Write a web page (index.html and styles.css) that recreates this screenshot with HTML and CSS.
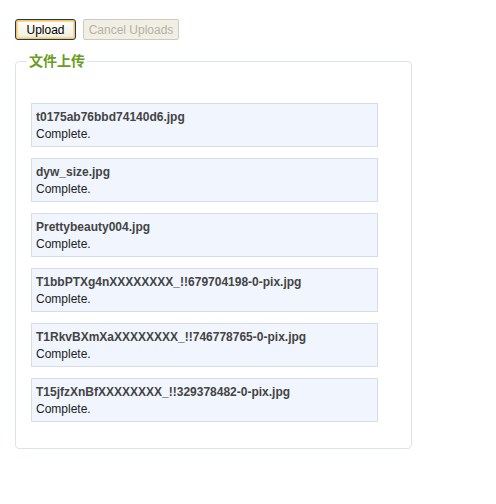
FILE: index.html
```html
<!DOCTYPE html>
<html lang="zh-CN">
<head>
    <meta charset="UTF-8">
    <title>文件上传</title>
    <link rel="stylesheet" href="styles.css">
</head>
<body>

<div class="toolbar">
    <button class="btn btn-upload">Upload</button>
    <button class="btn btn-cancel" disabled>Cancel Uploads</button>
</div>

<fieldset class="upload-box">
    <legend>文件上传</legend>
    <div class="progress-list">
        <div class="progress-item">
            <div class="file-name">t0175ab76bbd74140d6.jpg</div>
            <div class="file-status">Complete.</div>
        </div>
        <div class="progress-item">
            <div class="file-name">dyw_size.jpg</div>
            <div class="file-status">Complete.</div>
        </div>
        <div class="progress-item">
            <div class="file-name">Prettybeauty004.jpg</div>
            <div class="file-status">Complete.</div>
        </div>
        <div class="progress-item">
            <div class="file-name">T1bbPTXg4nXXXXXXXX_!!679704198-0-pix.jpg</div>
            <div class="file-status">Complete.</div>
        </div>
        <div class="progress-item">
            <div class="file-name">T1RkvBXmXaXXXXXXXX_!!746778765-0-pix.jpg</div>
            <div class="file-status">Complete.</div>
        </div>
        <div class="progress-item">
            <div class="file-name">T15jfzXnBfXXXXXXXX_!!329378482-0-pix.jpg</div>
            <div class="file-status">Complete.</div>
        </div>
    </div>
</fieldset>

</body>
</html>
```

FILE: styles.css
```css
body {
    margin: 0;
    padding: 19px 15px;
    font-family: "Liberation Sans", Arial, sans-serif;
    font-size: 12px;
    color: #333;
    background: #fff;
}
.toolbar {
    display: flex;
    gap: 7px;
}
.btn {
    height: 21px;
    padding: 0;
    font-family: "Liberation Sans", Arial, sans-serif;
    font-size: 12px;
    box-sizing: border-box;
}
.btn-upload {
    width: 61px;
    color: #000;
    border: 1px solid #1c3a5e;
    border-radius: 3px;
    background: linear-gradient(#fffffb, #f3f1e6 80%, #e2dfd0);
    box-shadow: inset 0 0 0 1px #f6c36b, inset 0 0 0 2px #fbd98e;
}
.btn-cancel {
    width: 96px;
    color: #b4b2a4;
    border: 1px solid #cdcbbf;
    border-radius: 2px;
    background: #f1efe4;
}
.upload-box {
    width: 397px;
    box-sizing: border-box;
    margin: 12px 0 0;
    padding: 0;
    border: 1px solid #dde3ed;
    border-radius: 4px;
}
.upload-box legend {
    margin-left: 11px;
    padding: 0 2px;
    font-size: 14px;
    line-height: 18px;
    font-weight: bold;
    color: #6a9c1d;
    font-family: "Liberation Sans", "Noto Sans CJK SC", sans-serif;
}
.progress-list {
    padding: 33px 15px 15px;
}
.progress-item {
    width: 347px;
    box-sizing: border-box;
    margin-bottom: 11px;
    padding: 5px 4px 4px;
    border: 1px solid #d6dde8;
    background: #f0f5fe;
}
.file-name {
    font-weight: bold;
    line-height: 17px;
    color: #444;
}
.file-status {
    line-height: 16px;
    color: #222;
}
```
